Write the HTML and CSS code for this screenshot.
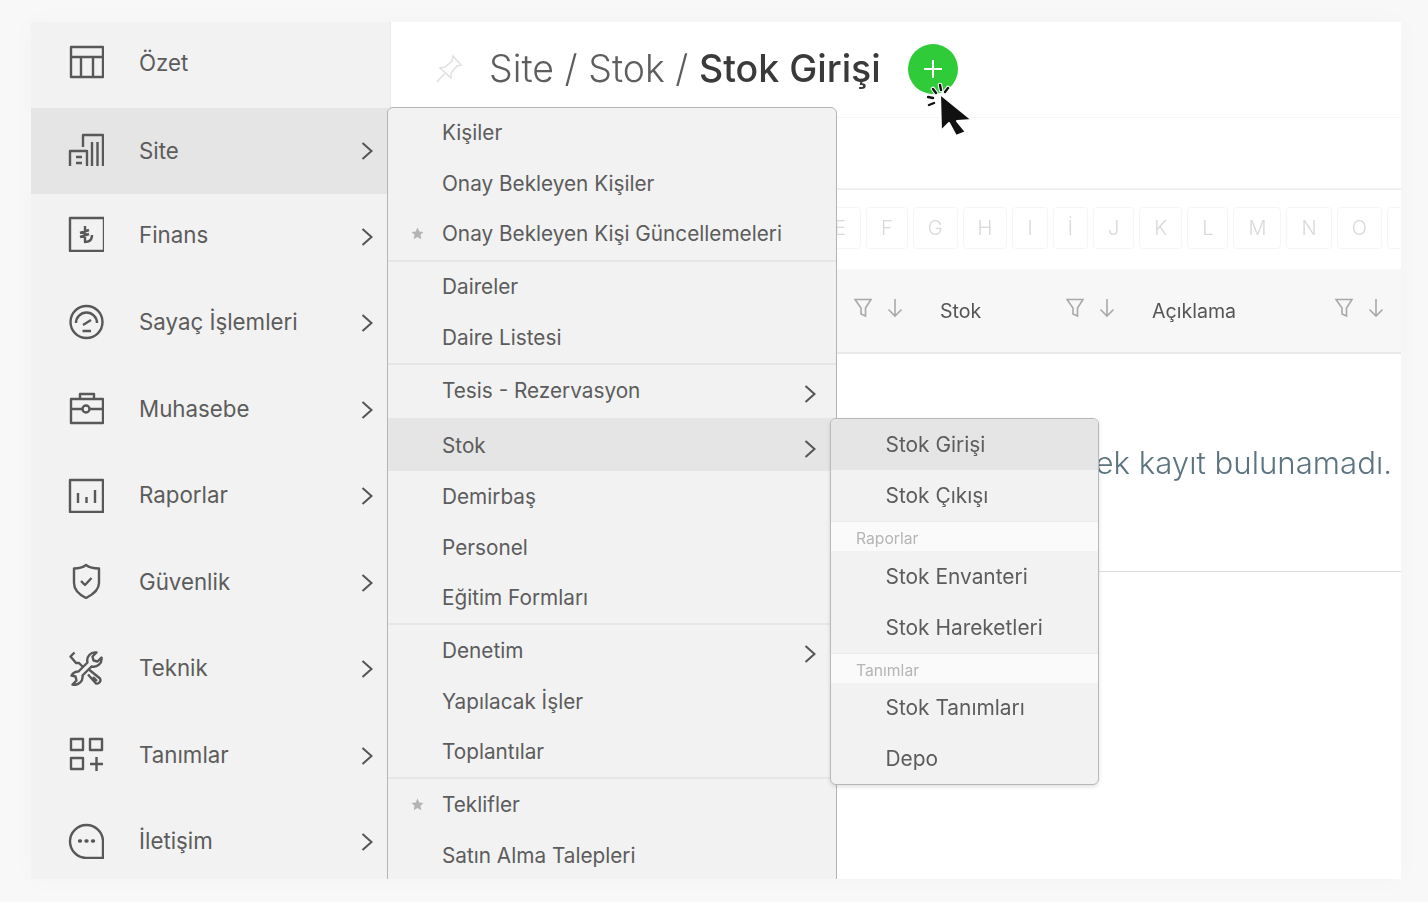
FILE: index.html
```html
<!DOCTYPE html>
<html lang="tr">
<head>
<meta charset="utf-8">
<title>Stok Girişi</title>
<link rel="stylesheet" href="styles.css">
</head>
<body>
<svg class="defs" width="0" height="0" aria-hidden="true">
  <symbol id="chev" viewBox="0 0 12 20"><path d="M1.5 2 L10.5 10 L1.5 18" fill="none" stroke="currentColor" stroke-width="2"/></symbol>
  <symbol id="star" viewBox="0 0 12 12"><path d="M6 .5 7.7 4.2 11.6 4.6 8.7 7.2 9.5 11.2 6 9.2 2.5 11.2 3.3 7.2 .4 4.6 4.3 4.2Z" fill="currentColor"/></symbol>
  <symbol id="filter" viewBox="0 0 18 20"><path d="M1 1.5H17L11.5 10V18L7 16V10Z" fill="none" stroke="currentColor" stroke-width="1.6"/></symbol>
  <symbol id="down" viewBox="0 0 16 20"><path d="M8 1V18M1.5 11.5 8 18 14.5 11.5" fill="none" stroke="currentColor" stroke-width="1.6"/></symbol>
</svg>
<div class="app">
  <nav class="side">
    <a class="side-item first"><svg class="ic" viewBox="0 0 36 36"><path d="M3 3H35V33H3ZM3 13H35M13 13V33M25 13V33"/></svg><span class="side-label">Özet</span></a>
    <a class="side-item active"><svg class="ic" viewBox="0 0 36 36"><path d="M15 15V3H35V34M24 10V34M29.500 10V34M2 34V19H19V34M8 25H14M8 31H14"/></svg><span class="side-label">Site</span><svg class="chev"><use href="#chev"/></svg></a>
    <a class="side-item finans"><svg class="ic" viewBox="0 0 36 36"><path d="M2 2H36V35H2ZM17 10V26C22 26 24 23 24 19M12 17 21 14M12 21 21 18"/></svg><span class="side-label">Finans</span><svg class="chev"><use href="#chev"/></svg></a>
    <a class="side-item"><svg class="ic" viewBox="0 0 36 36"><circle cx="18.500" cy="18" r="16"/><path d="M8 19A10.500 10.500 0 0 1 29 19M14.500 27H23M15 21 23 16"/></svg><span class="side-label">Sayaç İşlemleri</span><svg class="chev"><use href="#chev"/></svg></a>
    <a class="side-item"><svg class="ic" viewBox="0 0 36 36"><path d="M3 9H35V33H3ZM12 9V4H26V9M3 19H14M22 19H35"/><circle cx="18" cy="19" r="3.500"/></svg><span class="side-label">Muhasebe</span><svg class="chev"><use href="#chev"/></svg></a>
    <a class="side-item"><svg class="ic" viewBox="0 0 36 36"><path d="M2 3H35V35H2ZM10 16V26M18.500 20V26M27 13V26"/></svg><span class="side-label">Raporlar</span><svg class="chev"><use href="#chev"/></svg></a>
    <a class="side-item"><svg class="ic" viewBox="0 0 36 36"><path d="M18 2C22 5 27 5.500 31 5.500V20C31 27 24 32 18 35C12 32 6 27 6 20V5.500C10 5.500 14 5 18 2ZM13 18 17 22 23.500 15"/></svg><span class="side-label">Güvenlik</span><svg class="chev"><use href="#chev"/></svg></a>
    <a class="side-item"><svg class="ic" viewBox="0 0 36 36"><path d="M28.500 2.500 24.500 6.500 25.500 10.500 29.500 11.500 33.500 7.500A8 8 0 0 1 23.500 16.500L14.500 25.500A8 8 0 0 1 4.500 34.500L8.500 30.500 7.500 26.500 3.500 25.500A8 8 0 0 1 10.500 21.500L19.500 12.500A8 8 0 0 1 28.500 2.500ZM6.500 2.500 2.500 6.500 8 13H11L14.500 16.500M21.500 20 32 28.500A3.500 3.500 0 0 1 28 33.500L20 24.500M25 27 29 31"/></svg><span class="side-label">Teknik</span><svg class="chev"><use href="#chev"/></svg></a>
    <a class="side-item"><svg class="ic" viewBox="0 0 36 36"><path d="M3 3H15V14H3ZM22 3H34V14H22ZM3 22H15V33H3ZM22 28H35M28.500 21V35"/></svg><span class="side-label">Tanımlar</span><svg class="chev"><use href="#chev"/></svg></a>
    <a class="side-item"><svg class="ic" viewBox="0 0 36 36"><path d="M35 35H18A16.500 16.500 0 1 1 35 18Z"/><path class="dots" d="M11.500 18H12.500M18 18H19M24.500 18H25.500"/></svg><span class="side-label">İletişim</span><svg class="chev"><use href="#chev"/></svg></a>
  </nav>

  <main class="main">
    <header class="head">
      <svg class="pin" viewBox="0 0 28 30"><path d="M18 2 26 11 22 12 16 19 16 24 5 14 10 13 17 7ZM10 19 2 28" fill="none" stroke="currentColor" stroke-width="1.600"/></svg>
      <h1 class="title">Site / Stok / <b>Stok Girişi</b></h1>
      <button class="add"><svg viewBox="0 0 20 20"><path d="M10 1V19M1 10H19" stroke="currentColor" stroke-width="2"/></svg></button>
    </header>
    <div class="tools"></div>
    <div class="alpha">
      <span class="letter">E</span><span class="letter">F</span><span class="letter">G</span><span class="letter">H</span><span class="letter">I</span><span class="letter">İ</span><span class="letter">J</span><span class="letter">K</span><span class="letter">L</span><span class="letter">M</span><span class="letter">N</span><span class="letter">O</span><span class="letter">Ö</span>
    </div>
    <div class="thead">
      <div class="col col-a"><span class="th-ic"><svg class="fi"><use href="#filter"/></svg><svg class="ar"><use href="#down"/></svg></span></div>
      <div class="col col-b"><span>Stok</span><span class="th-ic"><svg class="fi"><use href="#filter"/></svg><svg class="ar"><use href="#down"/></svg></span></div>
      <div class="col col-c"><span>Açıklama</span><span class="th-ic"><svg class="fi"><use href="#filter"/></svg><svg class="ar"><use href="#down"/></svg></span></div>
    </div>
    <div class="empty">Gösterilecek kayıt bulunamadı.</div>
  </main>

  <div class="menu">
    <div class="group up">
      <a class="mi"><span class="slot"></span>Kişiler</a>
      <a class="mi"><span class="slot"></span>Onay Bekleyen Kişiler</a>
      <a class="mi"><span class="slot"><svg class="star"><use href="#star"/></svg></span>Onay Bekleyen Kişi Güncellemeleri</a>
    </div>
    <div class="group up">
      <a class="mi"><span class="slot"></span>Daireler</a>
      <a class="mi"><span class="slot"></span>Daire Listesi</a>
    </div>
    <div class="group up tesis">
      <a class="mi"><span class="slot"></span>Tesis - Rezervasyon<svg class="chev low"><use href="#chev"/></svg></a>
    </div>
    <div class="group">
      <a class="mi hl"><span class="slot"></span>Stok<svg class="chev low"><use href="#chev"/></svg></a>
      <a class="mi"><span class="slot"></span>Demirbaş</a>
      <a class="mi"><span class="slot"></span>Personel</a>
      <a class="mi"><span class="slot"></span>Eğitim Formları</a>
    </div>
    <div class="group">
      <a class="mi"><span class="slot"></span>Denetim<svg class="chev low"><use href="#chev"/></svg></a>
      <a class="mi"><span class="slot"></span>Yapılacak İşler</a>
      <a class="mi"><span class="slot"></span>Toplantılar</a>
    </div>
    <div class="group">
      <a class="mi"><span class="slot"><svg class="star"><use href="#star"/></svg></span>Teklifler</a>
      <a class="mi"><span class="slot"></span>Satın Alma Talepleri</a>
    </div>
  </div>

  <div class="submenu">
    <a class="si hl">Stok Girişi</a>
    <a class="si">Stok Çıkışı</a>
    <div class="sec">Raporlar</div>
    <a class="si">Stok Envanteri</a>
    <a class="si">Stok Hareketleri</a>
    <div class="sec">Tanımlar</div>
    <a class="si last">Stok Tanımları</a>
    <a class="si last">Depo</a>
  </div>

  <svg class="cursor" viewBox="0 0 52 56">
    <path d="M13 12 45 38 30 39 39 50 29 54 22 41 14 49Z" fill="#111" stroke="#fff" stroke-width="2" stroke-linejoin="round"/>
    <path d="M6 7 9 11M13 3 14 8M21 6 18 10M1 15 6 16M2 23 7 21" stroke="#fff" stroke-width="4.500" stroke-linecap="round"/>
    <path d="M6 7 9 11M13 3 14 8M21 6 18 10M1 15 6 16M2 23 7 21" stroke="#111" stroke-width="2.400" stroke-linecap="round"/>
  </svg>
</div>
</body>
</html>
```
FILE: styles.css
```css
* { box-sizing: border-box; }
html, body { height: 100%; }
body {
  margin: 0;
  padding: 22px 27px 23px 31px;
  background: #f8f8f8;
  font-family: Inter, "Noto Sans", sans-serif;
  color: #555;
  overflow: hidden;
}
.defs { position: absolute; }
.app {
  position: relative;
  display: flex;
  height: 857px;
  width: 1370px;
  overflow: hidden;
  background: #fff;
  box-shadow: 0 0 26px rgba(0,0,0,.025);
  filter: blur(.6px);
}
.side {
  flex: 0 0 360px;
  background: #f2f2f2;
  border-right: 1px solid #e9e9e9;
  display: flex;
  flex-direction: column;
}
.side-item {
  flex: 0 0 86.500px;
  display: flex;
  align-items: center;
  padding-left: 37px;
  padding-right: 17px;
  font-size: 22.300px;
  color: #5c5c5c;
}
.side-item.first { flex-basis: 86px; padding-bottom: 3px; }
.side-item.active { flex-basis: 85.500px; background: #e5e5e5; }
.ic {
  width: 36px;
  height: 36px;
  margin-bottom: 3px;
  fill: none;
  stroke: #585858;
  stroke-width: 2.400;
  stroke-linejoin: round;
  flex: none;
}
.ic .dots { stroke-width: 3.400; stroke-linecap: round; }
.side-label { margin-left: 35px; margin-bottom: 3px; flex: 1; }
.active .side-label { margin-bottom: 1px; }
.active .ic { margin-bottom: 1px; }
.finans .side-label, .finans .ic { margin-bottom: 5px; }
.chev { width: 12px; height: 20px; color: #555; flex: none; }

.main { flex: 1; min-width: 0; display: flex; flex-direction: column; }
.head {
  flex: 0 0 96px;
  display: flex;
  align-items: center;
  padding: 0 0 2px 44px;
  border-bottom: 1px solid #f6f6f6;
}
.pin { width: 28px; height: 30px; color: #e2e2e2; flex: none; }
.title {
  margin: 0 0 0 26px;
  font-size: 37.500px;
  font-weight: 300;
  color: #5e5e5e;
  white-space: nowrap;
}
.title b { font-weight: 500; color: #3a3a3a; }
.add {
  width: 50px;
  height: 50px;
  margin-left: 27px;
  padding: 15px;
  border: 0;
  border-radius: 50%;
  background: #2fcb39;
  color: #fff;
  display: flex;
}
.add svg { width: 20px; height: 20px; }
.tools { flex: 0 0 72px; border-bottom: 2px solid #f0f0f0; }
.alpha {
  flex: 0 0 79px;
  display: flex;
  gap: 5px;
  padding: 17px 0 0 428px;
  overflow: hidden;
}
.letter {
  flex: none;
  height: 42px;
  padding: 0 14px;
  display: flex;
  align-items: center;
  justify-content: center;
  border: 1px solid #f5f5f5;
  border-radius: 4px;
  font-size: 20px;
  font-weight: 300;
  color: #d9d9d9;
}
.thead {
  flex: 0 0 85px;
  display: flex;
  justify-content: flex-end;
  background: #f7f7f7;
  border-bottom: 2px solid #e9e9e9;
  font-size: 19.600px;
  color: #555;
}
.col { display: flex; align-items: center; padding: 0 17px 0 20px; }
.col-a { flex: 1; }
.col-b { flex: 0 0 212px; }
.col-c { flex: 0 0 269px; }
.th-ic { margin-left: auto; display: flex; gap: 15px; align-items: center; margin-top: -6px; color: #a9a9a9; }
.fi { width: 18px; height: 20px; }
.ar { width: 16px; height: 20px; }
.empty {
  flex: 0 0 218px;
  display: flex;
  align-items: center;
  justify-content: flex-end;
  padding: 0 9px 0 0;
  border-bottom: 1px solid #dedede;
  font-size: 31.200px;
  font-weight: 300;
  color: #5b7480;
}

.menu {
  position: absolute;
  left: 356px;
  top: 85px;
  width: 450px;
  background: #f2f2f2;
  border: 1px solid #b4b4b4;
  border-radius: 6px 6px 0 0;
  font-size: 20.750px;
  color: #5c5c5c;
}
.group { border-bottom: 2px solid #e6e6e6; }
.group:last-child { border-bottom: 0; }
.mi {
  height: 50.700px;
  display: flex;
  align-items: center;
  padding: 0 20px 0 23px;
  white-space: nowrap;
}
.group.up .mi { padding-bottom: 2px; }
.group.tesis .mi { height: 53px; }
.slot { flex: 0 0 31px; display: flex; align-items: center; }
.star { width: 13px; height: 13px; color: #b4b4b4; }
.mi.hl, .si.hl { background: #e5e5e5; }
.chev.low { margin-left: auto; margin-top: 7px; }

.submenu {
  position: absolute;
  left: 799px;
  top: 396px;
  width: 269px;
  background: #f2f2f2;
  border: 1px solid #b8b8b8;
  border-radius: 6px;
  box-shadow: 0 2px 4px rgba(0,0,0,.12);
  font-size: 20.900px;
  color: #5c5c5c;
  overflow: hidden;
}
.si { height: 51px; display: flex; align-items: center; padding-left: 54.500px; }
.si.last { height: 50.500px; padding-bottom: 1px; }
.sec {
  height: 30px;
  display: flex;
  align-items: center;
  padding: 3px 0 0 25px;
  background: #fafafa;
  border-top: 1px solid #ececec;
  font-size: 15.700px;
  color: #b5b5b5;
}
.cursor {
  position: absolute;
  left: 896px;
  top: 60px;
  width: 52px;
  height: 56px;
}
```
